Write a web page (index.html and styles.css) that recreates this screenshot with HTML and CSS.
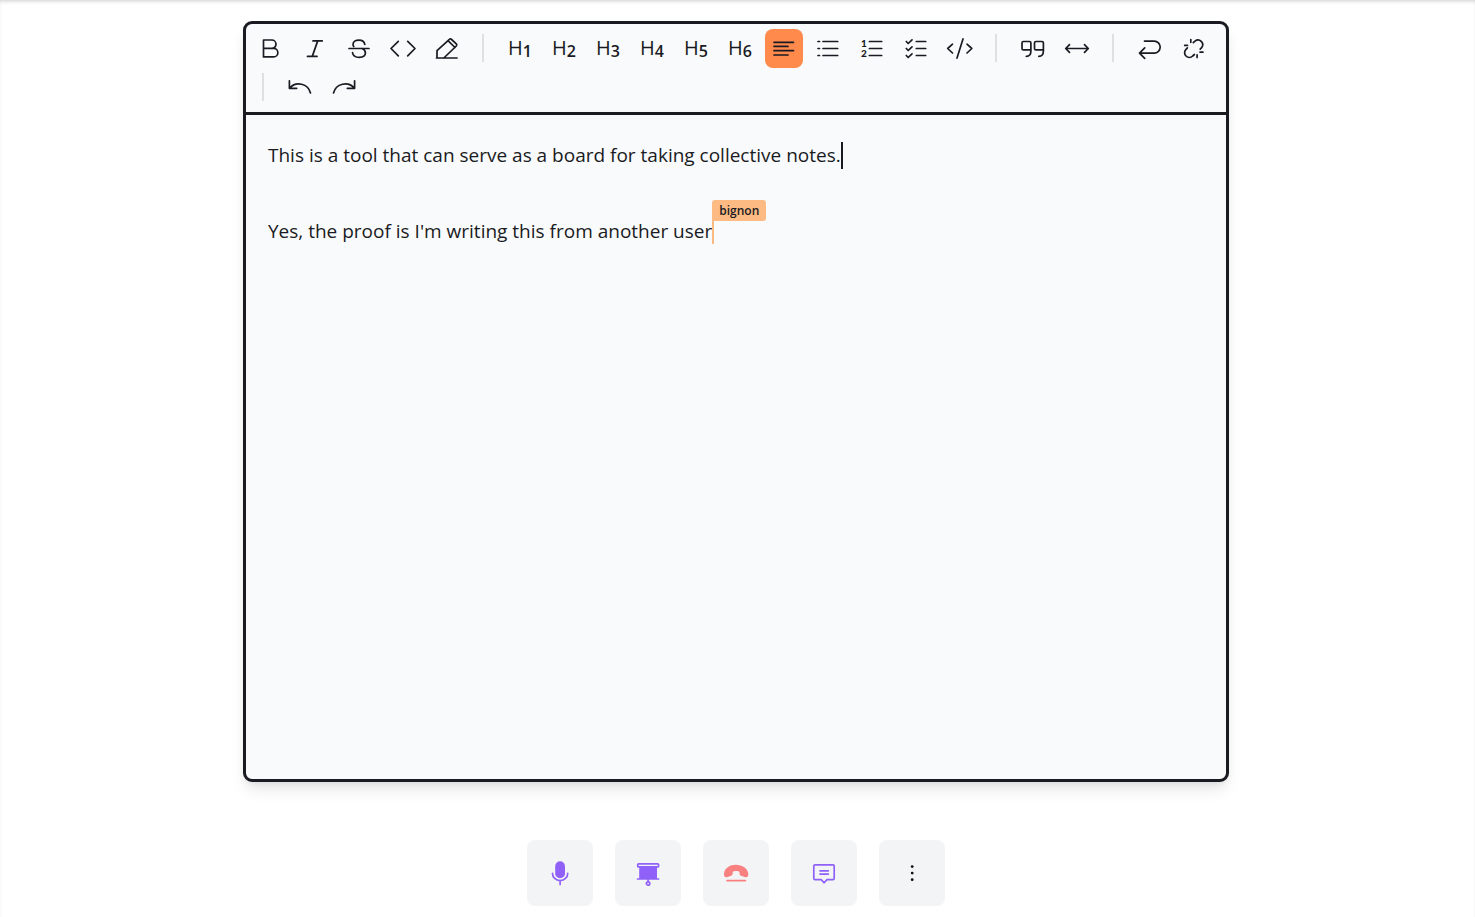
FILE: index.html
```html
<!DOCTYPE html>
<html lang="en">
<head>
<meta charset="utf-8">
<title>Collective notes</title>
<link rel="stylesheet" href="styles.css">
</head>
<body>
<div class="page">
  <main class="editor">
    <div class="toolbar" role="toolbar" aria-label="Formatting">
      <button class="tool" aria-label="Bold"><svg class="icon" viewBox="-15 -15 30 30"><path d="M-7.5-8H.8a4.2 4.2 0 0 1 0 8.4H-7.5zM-7.5 .4H2.6a4.2 4.2 0 0 1 0 8.5H-7.5z"/></svg></button>
      <button class="tool" aria-label="Italic"><svg class="icon" viewBox="-15 -15 30 30"><path d="M-2-7.1H7.2M-7.5 8.4H2M2.7-7.1L-2.7 8.4"/></svg></button>
      <button class="tool" aria-label="Strikethrough"><svg class="icon" viewBox="-15 -15 30 30"><path d="M-10 .5H10M5.8-3.7C5.3-6.5 3-7.9 0-7.9C-3.5-7.9-6-6.3-6-3.6C-6-2.7-5.7-2-5.2-1.5M3 .5C5.4 1.4 6.4 3 6.4 5.1C6.4 7.8 3.8 9.4 .3 9.4C-3.4 9.4-6.1 7.7-6.5 4.5"/></svg></button>
      <button class="tool" aria-label="Code"><svg class="icon" viewBox="-15 -15 30 30"><path d="M-4.7-6.7L-12 .5L-4.7 7.9M4.7-6.7L12 .5L4.7 7.9"/></svg></button>
      <button class="tool" aria-label="Highlight"><svg class="icon" viewBox="-15 -15 30 30"><path d="M-10 10V2.7L2.4-8.6Q3.5-9.5 4.6-8.5L9.3-4.1Q10.3-3.1 9.3-2L-3.2 10M-10.5 10H10M1-7.3L8-.5"/></svg></button>
      <span class="divider"></span>
      <button class="tool heading">H<sub>1</sub></button>
      <button class="tool heading">H<sub>2</sub></button>
      <button class="tool heading">H<sub>3</sub></button>
      <button class="tool heading">H<sub>4</sub></button>
      <button class="tool heading">H<sub>5</sub></button>
      <button class="tool heading">H<sub>6</sub></button>
      <button class="tool active" aria-label="Paragraph" aria-pressed="true"><svg class="icon" viewBox="-15 -15 30 30"><path d="M-10-5.7H9.5M-10-1.6H4M-10 2.7H9.5M-10 7H4"/></svg></button>
      <button class="tool" aria-label="Bullet list"><svg class="icon" viewBox="-15 -15 30 30"><path d="M-10-6.5H-8.5M-10 .5H-8.5M-10 7.5H-8.5M-5-6.5H9.7M-5 .5H9.7M-5 7.5H9.7"/></svg></button>
      <button class="tool" aria-label="Numbered list"><svg class="icon" viewBox="-15 -15 30 30"><text class="numeral" x="-11" y="-1">1</text><text class="numeral" x="-11" y="9">2</text><path d="M-2.6-6.5H9.7M-2.6 .5H9.7M-2.6 7.5H9.7"/></svg></button>
      <button class="tool" aria-label="Task list"><svg class="icon" viewBox="-15 -15 30 30"><path d="M-9.7-6.5L-7.8-4.5L-4-8.2M-9.7 .5L-7.8 2.5L-4-1.2M-9.7 7.5L-7.8 9.5L-4 5.8M.3-6.5H9.7M.3 .5H9.7M.3 7.5H9.7"/></svg></button>
      <button class="tool" aria-label="Code block"><svg class="icon" viewBox="-15 -15 30 30"><path d="M-7.5-3.8L-12.3 .5L-7.5 5M7-3.8L11.8 .5L7 5M3-9.1L-3 10.1"/></svg></button>
      <span class="divider"></span>
      <button class="tool" aria-label="Blockquote"><svg class="icon" viewBox="-15 -15 30 30"><path d="M-2.1 1.9H-9.6Q-11 1.9-11 .5V-5.1Q-11-6.5-9.6-6.5H-3.5Q-2.1-6.5-2.1-5.1V3.1Q-2.1 8.3-6.7 8.3M10.4 1.9H2.9Q1.5 1.9 1.5 .5V-5.1Q1.5-6.5 2.9-6.5H9Q10.4-6.5 10.4-5.1V3.1Q10.4 8.3 5.8 8.3"/></svg></button>
      <button class="tool" aria-label="Horizontal rule"><svg class="icon" viewBox="-15 -15 30 30"><path d="M-11.3 .5H11.3M-7.5-3.4L-11.3 .5L-7.5 4.4M7.5-3.4L11.3 .5L7.5 4.4"/></svg></button>
      <span class="divider"></span>
      <button class="tool" aria-label="Hard break"><svg class="icon" viewBox="-15 -15 30 30"><path d="M-5.5-6.9H4.2a6 6 0 0 1 0 12H-10.5M-5.3-.1L-10.5 5.1L-5.3 10.3"/></svg></button>
      <button class="tool" aria-label="Remove formatting"><svg class="icon" viewBox="-15 -15 30 30"><path d="M-.7-5.3L1-6.9A4.7 4.7 0 0 1 7.6-.3L6.2 1.1M-6.6-.1L-8 1.3A4.7 4.7 0 0 0-1.3 8L.4 6.5M-3.2-8.5V-5.7M-9.3-2.6H-6.5M3.1 6.8V9.5M6 4.1H9"/></svg></button>
      <span class="divider"></span>
      <button class="tool" aria-label="Undo"><svg class="icon" viewBox="-15 -15 30 30"><path d="M-10.6-6.2V1.3H-3.3M-10.3 1A12.1 12.1 0 0 1 10.5 6"/></svg></button>
      <button class="tool" aria-label="Redo"><svg class="icon" viewBox="-15 -15 30 30"><path d="M10.6-6.2V1.3H3.3M10.3 1A12.1 12.1 0 0 0-10.5 6"/></svg></button>
    </div>
    <div class="content" role="textbox" aria-multiline="true" aria-label="Notes" contenteditable="true" spellcheck="false">
      <p>This is a tool that can serve as a board for taking collective notes.<span class="caret"></span></p>
      <p><br></p>
      <p>Yes, the proof is I'm writing this from another user<span class="peer"><span class="peer-name">bignon</span></span></p>
    </div>
  </main>
  <nav class="actions" aria-label="Call controls">
    <button class="action" aria-label="Microphone"><svg class="icon purple" viewBox="-15 -15 30 30"><rect class="solid" x="-4.8" y="-11.7" width="9.8" height="17" rx="4.9"/><path d="M-7.5.4A7.6 7.2 0 0 0 7.7.4M.1 7.8V11.5"/></svg></button>
    <button class="action" aria-label="Whiteboard"><svg class="icon purple" viewBox="-15 -15 30 30"><path class="solid" d="M-8.8-6H9V6H-8.8z"/><rect x="-10.3" y="-9.2" width="20.9" height="3.1" rx="1"/><path d="M-10.4 6H10.6M.1 6V8.6"/><circle cx=".1" cy="10.5" r="1.7"/></svg></button>
    <button class="action" aria-label="Hang up"><svg class="icon red" viewBox="-15 -15 30 30"><path class="solid" d="M-12 1.2C-11.8-5-6-8.2 0-8.2S12-4.8 12.3 1.2C12.3 3 11.2 4.6 9.4 4.2L5 2.7C3.7 2.2 3.4 1 3.5-1.3C2-2.2-1.8-2.2-3.3-1.3C-3.2 1-3.5 2.2-4.8 2.7L-9 4.2C-11 4.7-12 3-12 1.2Z"/><path d="M-9 7.6H9.4"/></svg></button>
    <button class="action" aria-label="Chat"><svg class="icon purple" viewBox="-15 -15 30 30"><path d="M-9-8.2H9Q10.2-8.2 10.2-7V5.2Q10.2 6.6 9 6.6H3L.1 9.8L-2.8 6.6H-9Q-10.2 6.6-10.2 5.2V-7Q-10.2-8.2-9-8.2zM-4-2.2H4.3M-4 1.1H4.3"/></svg></button>
    <button class="action" aria-label="More"><svg class="icon dots" viewBox="-15 -15 30 30"><circle cx=".2" cy="-6.4" r="1.4"/><circle cx=".2" cy=".1" r="1.4"/><circle cx=".2" cy="6.7" r="1.4"/></svg></button>
  </nav>
</div>
</body>
</html>
```
FILE: styles.css
```css
* {
  box-sizing: border-box;
}

body {
  margin: 0;
  background: #fff;
  color: #1a1b22;
  font-family: "Open Sans", "Noto Sans", sans-serif;
}

.page {
  display: flex;
  flex-direction: column;
  align-items: center;
  gap: 58px;
  min-height: 100vh;
  padding: 21px 3px 11px 0;
  box-shadow: inset 0 3px 4px -2px rgba(0, 0, 0, 0.2);
}

.editor {
  display: flex;
  flex: 1;
  flex-direction: column;
  width: 100%;
  max-width: 986px;
  border: 3px solid #1a1b22;
  border-radius: 9px;
  background: #f9fafc;
  box-shadow: 0 10px 16px -3px rgba(0, 0, 0, 0.1), 0 4px 8px -4px rgba(0, 0, 0, 0.1);
}

.toolbar {
  display: flex;
  flex-wrap: wrap;
  align-items: center;
  column-gap: 6px;
  padding: 5px 6px;
  border-bottom: 3px solid #1a1b22;
}

button {
  display: flex;
  align-items: center;
  justify-content: center;
  padding: 0;
  border: 0;
  background: none;
  color: inherit;
  font-family: inherit;
  cursor: pointer;
}

.tool {
  width: 38px;
  height: 39px;
  padding-bottom: 1px;
  border-radius: 8px;
}

.active {
  background: #ff8a4c;
}

.divider {
  width: 2px;
  height: 28px;
  margin: 0 11px 1px 10px;
  background: #dfe0e2;
}

.heading {
  padding-bottom: 2px;
  font-size: 20px;
  line-height: 20px;
}

.heading sub {
  padding-top: 6px;
  font-size: 16px;
  font-weight: 600;
  line-height: 16px;
  vertical-align: baseline;
}

.icon {
  width: 30px;
  height: 30px;
  fill: none;
  stroke: currentColor;
  stroke-width: 1.7;
  stroke-linecap: round;
  stroke-linejoin: round;
}

.numeral {
  fill: currentColor;
  stroke: none;
  font-family: Lato, sans-serif;
  font-size: 10px;
  font-weight: 900;
}

.content {
  flex: 1;
  padding: 21px 22px;
  outline: none;
  font-size: 19px;
  line-height: 38px;
}

.content p {
  margin: 0;
}

.caret {
  display: inline-block;
  width: 2px;
  height: 27px;
  background: #1a1b22;
  vertical-align: -7px;
}

.peer {
  position: relative;
  margin-right: -2px;
  border-right: 2px solid #fdba83;
}

.peer-name {
  position: absolute;
  bottom: calc(100% - 3px);
  left: 0;
  padding: 0 7px;
  border-radius: 3px 3px 3px 0;
  background: #fdba83;
  font-size: 12px;
  font-weight: 600;
  line-height: 21px;
}

.actions {
  display: flex;
  gap: 22px;
}

.action {
  width: 66px;
  height: 66px;
  border-radius: 8px;
  background: #f3f4f6;
}

.purple {
  color: #9061f9;
}

.red {
  color: #f98080;
}

.solid {
  fill: currentColor;
  stroke: none;
}

.dots {
  color: #111;
  fill: currentColor;
  stroke: none;
}
```
